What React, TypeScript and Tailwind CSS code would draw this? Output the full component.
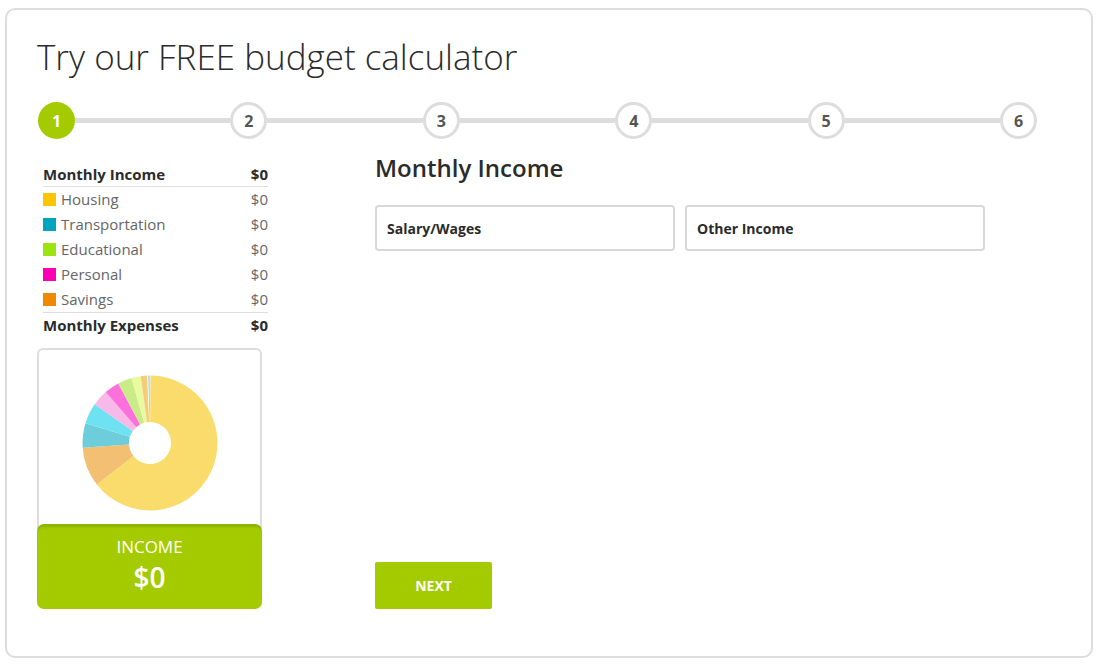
import * as React from "react";

const GREEN = "#a3cb00";

const rows = [
  { label: "Housing", color: "#fdc400" },
  { label: "Transportation", color: "#00a5bd" },
  { label: "Educational", color: "#9ce40f" },
  { label: "Personal", color: "#fc00b4" },
  { label: "Savings", color: "#ef8a00" },
];

// donut slices, degrees clockwise from 12 o'clock
const slices = [
  { from: 0.4, to: 232, color: "#f9dc6c" },
  { from: 232, to: 266, color: "#f3bf72" },
  { from: 266, to: 287, color: "#6dcddb" },
  { from: 287, to: 305, color: "#6ee2f0" },
  { from: 305, to: 319, color: "#f8b9e8" },
  { from: 319, to: 332, color: "#fb70db" },
  { from: 332, to: 344, color: "#c9ec89" },
  { from: 344, to: 352, color: "#e9fa9f" },
  { from: 352, to: 357.5, color: "#f5cd78" },
  { from: 358.6, to: 359.6, color: "#7cc6f0" },
];

function pt(cx: number, cy: number, r: number, deg: number) {
  const a = (deg * Math.PI) / 180;
  return [cx + r * Math.sin(a), cy - r * Math.cos(a)];
}

function arc(cx: number, cy: number, r0: number, r1: number, a0: number, a1: number) {
  const large = a1 - a0 > 180 ? 1 : 0;
  const [x0, y0] = pt(cx, cy, r1, a0);
  const [x1, y1] = pt(cx, cy, r1, a1);
  const [x2, y2] = pt(cx, cy, r0, a1);
  const [x3, y3] = pt(cx, cy, r0, a0);
  return `M${x0} ${y0} A${r1} ${r1} 0 ${large} 1 ${x1} ${y1} L${x2} ${y2} A${r0} ${r0} 0 ${large} 0 ${x3} ${y3} Z`;
}

function Donut() {
  return (
    <svg width="140" height="140" viewBox="0 0 140 140">
      {slices.map((s, i) => (
        <path key={i} d={arc(70, 70, 21, 67.5, s.from, s.to)} fill={s.color} />
      ))}
    </svg>
  );
}

function Step({ n, active }: { n: number; active?: boolean }) {
  return (
    <span
      className={[
        "flex h-[37px] w-[37px] shrink-0 items-center justify-center rounded-full text-[16px] font-bold",
        active
          ? "bg-[#a3cb00] text-white"
          : "border-[3px] border-[#dddddd] bg-white text-[#555555]",
      ].join(" ")}
    >
      {n}
    </span>
  );
}

export default function App() {
  const steps = [1, 2, 3, 4, 5, 6];

  return (
    <div
      className="h-[668px] w-[1105px] bg-white px-[5px] pt-[8px]"
      style={{ fontFamily: '"Open Sans", "Liberation Sans", sans-serif' }}
    >
      <div className="h-[650px] w-[1088px] rounded-[10px] border-2 border-[#dddddd] px-[30px]">
        <h1 className="mt-[25px] h-[44px] text-[35px] font-light leading-[44px] text-[#2b2b2b]">
          Try our FREE budget calculator
        </h1>

        {/* stepper */}
        <div className="ml-[1px] mt-[23px] flex w-[999px] items-center">
          {steps.map((n, i) => (
            <React.Fragment key={n}>
              <Step n={n} active={n === 1} />
              {i < steps.length - 1 && <div className="h-[5px] flex-1 bg-[#dddddd]" />}
            </React.Fragment>
          ))}
        </div>

        <div className="mt-[15px] flex items-start">
          {/* summary column */}
          <div className="w-[225px] shrink-0 pt-[8px]">
            <div className="ml-[6px] w-[225px] text-[15px]">
              <div className="flex h-[25px] items-center justify-between border-b border-[#dddddd] font-bold text-[#2b2b2b]">
                <span>Monthly Income</span>
                <span>$0</span>
              </div>
              {rows.map((r) => (
                <div key={r.label} className="flex h-[25px] items-center justify-between text-[#666666]">
                  <span className="flex items-center">
                    <span className="mr-[5px] h-[13px] w-[13px]" style={{ background: r.color }} />
                    {r.label}
                  </span>
                  <span>$0</span>
                </div>
              ))}
              <div className="flex h-[26px] items-center justify-between border-t border-[#dddddd] font-bold text-[#2b2b2b]">
                <span>Monthly Expenses</span>
                <span>$0</span>
              </div>
            </div>

            <div className="mt-[10px] w-[225px]">
              <div className="flex h-[181px] justify-center rounded-t-[6px] border-2 border-b-0 border-[#dddddd] pt-[23px]">
                <Donut />
              </div>
              <div className="-mt-[5px] flex h-[85px] flex-col items-center rounded-[7px] bg-[#a3cb00] pt-[11px] text-white shadow-[inset_0_4px_2px_-1px_rgba(0,0,0,0.12)]">
                <span className="text-[17px] leading-[24px]">INCOME</span>
                <span className="text-[28px] font-semibold leading-[36px]">$0</span>
              </div>
            </div>
          </div>

          {/* form column */}
          <div className="ml-[113px] w-[610px]">
            <h2 className="h-[28px] text-[24px] font-semibold leading-[28px] text-[#2b2b2b]">
              Monthly Income
            </h2>
            <div className="mt-[23px] flex gap-[10px]">
              {["Salary/Wages", "Other Income"].map((l) => (
                <div
                  key={l}
                  className="flex h-[46px] w-[300px] items-center rounded-[4px] border-2 border-[#d8d8d8] pl-[10px] text-[14px] font-bold text-[#2b2b2b]"
                >
                  {l}
                </div>
              ))}
            </div>
            <button
              type="button"
              className="mt-[311px] h-[47px] w-[117px] rounded-[2px] text-[14px] font-bold text-white"
              style={{ background: GREEN }}
            >
              NEXT
            </button>
          </div>
        </div>
      </div>
    </div>
  );
}
